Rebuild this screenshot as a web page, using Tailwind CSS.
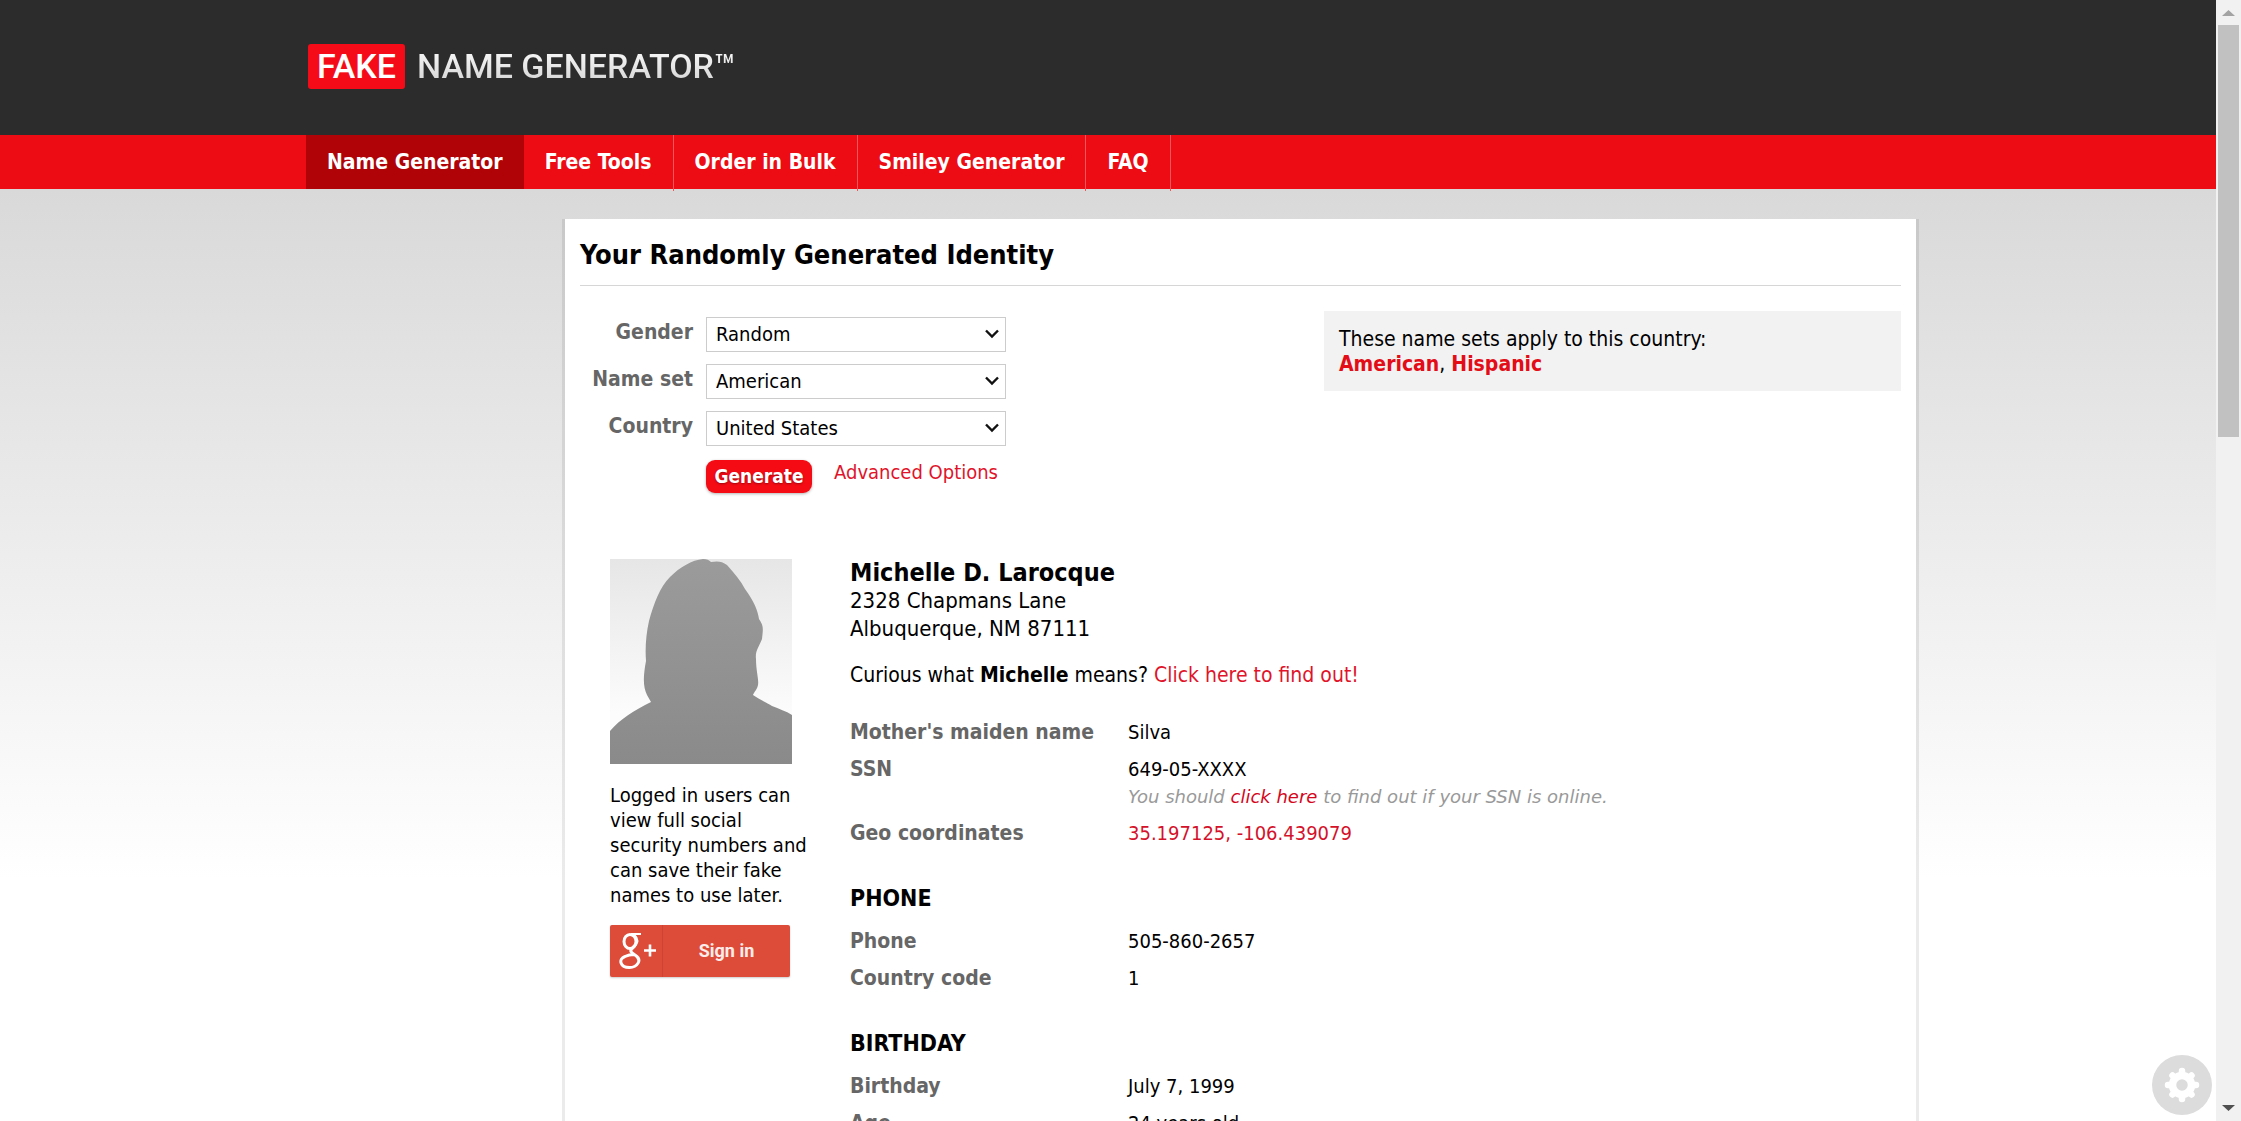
<!DOCTYPE html>
<html lang="en">
<head>
<meta charset="utf-8">
<title>Fake Name Generator</title>
<script src="https://cdn.jsdelivr.net/npm/@tailwindcss/browser@4"></script>
</head>
<body class="h-screen overflow-hidden bg-white font-['DejaVu_Sans_Condensed','DejaVu_Sans',sans-serif] text-[20px] leading-[25px] text-black">
<div class="flex h-full">
  <div class="h-full min-w-0 flex-1 overflow-hidden">
    <header class="h-[135px] bg-[#2c2c2c]">
      <div class="mx-auto max-w-[1616px] px-2 pt-11">
        <a href="#" class="flex w-fit items-center gap-3 font-['Roboto',sans-serif] text-[34px] font-medium leading-[45px]">
          <span class="rounded-[3px] bg-[#f50b17] px-[9px] text-white">FAKE</span>
          <span class="bg-linear-to-b from-white to-[#cfcfcf] bg-clip-text text-transparent">NAME GENERATOR™</span>
        </a>
      </div>
    </header>
    <nav class="h-[54px] bg-[#ed0c13]">
      <div class="mx-auto flex max-w-[1616px] pl-1.5 text-[21px] font-bold leading-[54px] text-white">
        <a href="#" class="h-[54px] bg-[#b00307] px-[21px]">Name Generator</a>
        <a href="#" class="h-14 border-r border-[#f2555a] px-[21px]">Free Tools</a>
        <a href="#" class="h-14 border-r border-[#f2555a] px-[21px]">Order in Bulk</a>
        <a href="#" class="h-14 border-r border-[#f2555a] px-[21px]">Smiley Generator</a>
        <a href="#" class="h-14 border-r border-[#f2555a] px-[21px]">FAQ</a>
      </div>
    </nav>
    <div class="h-full bg-linear-to-b from-[#d9d9d9] to-white to-[690px] pt-[30px]">
      <main class="mx-auto h-full max-w-[1616px] pl-[265px]">
        <div class="h-full bg-white px-[15px] pt-4 shadow-[0_3px_0_3px_rgba(0,0,0,0.08)]">
          <h1 class="border-b border-[#d6d6d6] pb-2.5 text-[27px] font-bold leading-10">Your Randomly Generated Identity</h1>
          <div class="flex items-start justify-between pt-[25px]">
            <form class="grid grid-cols-[113px_300px] gap-x-[13px] gap-y-3 pt-1.5">
              <label for="gender" class="pt-[3px] text-right text-[21px] font-bold text-[#666]">Gender</label>
              <div class="relative">
                <select id="gender" class="block h-[35px] w-full appearance-none border border-[#ccc] bg-white pl-[9px]"><option>Random</option></select>
                <svg class="pointer-events-none absolute right-[7px] top-3 h-[10px] w-[14px]" viewBox="0 0 14 10" fill="none" stroke="#111" stroke-width="2.4"><path d="M1 1.5 7 7.5 13 1.5"/></svg>
              </div>
              <label for="nameset" class="pt-[3px] text-right text-[21px] font-bold text-[#666]">Name set</label>
              <div class="relative">
                <select id="nameset" class="block h-[35px] w-full appearance-none border border-[#ccc] bg-white pl-[9px]"><option>American</option></select>
                <svg class="pointer-events-none absolute right-[7px] top-3 h-[10px] w-[14px]" viewBox="0 0 14 10" fill="none" stroke="#111" stroke-width="2.4"><path d="M1 1.5 7 7.5 13 1.5"/></svg>
              </div>
              <label for="country" class="pt-[3px] text-right text-[21px] font-bold text-[#666]">Country</label>
              <div class="relative">
                <select id="country" class="block h-[35px] w-full appearance-none border border-[#ccc] bg-white pl-[9px]"><option>United States</option></select>
                <svg class="pointer-events-none absolute right-[7px] top-3 h-[10px] w-[14px]" viewBox="0 0 14 10" fill="none" stroke="#111" stroke-width="2.4"><path d="M1 1.5 7 7.5 13 1.5"/></svg>
              </div>
              <div class="col-start-2 flex items-start gap-[22px] pt-0.5">
                <button type="button" class="h-[33px] w-[106px] rounded-[9px] bg-[#f40b14] text-[19px] font-bold text-white shadow-[0_1px_3px_rgba(0,0,0,0.3)] [text-shadow:0_1px_2px_rgba(0,0,0,0.35)]">Generate</button>
                <a href="#" class="whitespace-nowrap text-[#e0142a]">Advanced Options</a>
              </div>
            </form>
            <aside class="h-20 w-[577px] bg-[#f2f2f2] px-[15px] py-4">
              <p class="text-[21px]">These name sets apply to this country:</p>
              <p class="text-[21px]"><a href="#" class="font-bold text-[#e30d17]">American</a>, <a href="#" class="font-bold text-[#e30d17]">Hispanic</a></p>
            </aside>
          </div>
          <div class="flex gap-10 pl-[30px] pt-[66px]">
            <div class="w-[200px] shrink-0">
              <svg class="block h-[205px] w-[182px]" viewBox="0 0 182 205" role="img" aria-label="Silhouette of a woman">
                <defs>
                  <linearGradient id="bg" x1="0" y1="0" x2="0" y2="1"><stop offset="0" stop-color="#e6e6e6"/><stop offset=".75" stop-color="#fcfcfc"/></linearGradient>
                  <linearGradient id="fg" x1="0" y1="0" x2="0" y2="1"><stop offset="0" stop-color="#9b9b9b"/><stop offset="1" stop-color="#8a8a8a"/></linearGradient>
                </defs>
                <path fill="url(#bg)" d="M0 0h182v205H0z"/>
                <path fill="url(#fg)" d="M0 172C10 160 25 151 41 143L37 136C33 128 33 118 36 102C35 90 36 75 39 62C44 44 50 28 60 18C70 8 82 1 93 0C97 0 99 1 101 3C107 2 112 2 117 6C124 14 131 22 135 30C144 42 148 52 149 60C154 67 153 70 152 80C149 88 145 92 146 100C146 112 149 120 148 126C147 131 144 133 143 136C150 141 158 144 162 147C169 150 176 152 182 156V205H0Z"/>
              </svg>
              <p class="pt-[19px]">Logged in users can view full social security numbers and can save their fake names to use later.</p>
              <button type="button" class="mt-[17px] flex h-[52px] w-[180px] rounded-[2px] bg-[#dd4b39] font-['Roboto',sans-serif] text-[18px] font-bold leading-[52px] text-white/90 shadow-[0_1px_2px_rgba(0,0,0,0.2)]">
                <span class="flex h-full w-[53px] items-center border-r border-[#cf4332] pl-[9px]">
                  <svg class="h-[38px] w-[38px]" viewBox="0 0 38 38" fill="none" stroke="#fff"><g stroke-width="3"><ellipse cx="11" cy="9.500" rx="6" ry="7"/><path stroke-width="2" d="M12 2H22"/><path d="M15 3C20 8 18 12 14 15.500C10 19 12 20.500 16 23C24 28 18 35.500 10.500 35.500C1 35.500-1 27 6 24.500C9 23 12 22.500 15 22.500"/></g><path stroke-width="2.600" d="M25 18.500H37M31 12.500V24.500"/></svg>
                </span>
                <span class="flex-1">Sign in</span>
              </button>
            </div>
            <div class="min-w-0 flex-1">
              <h2 class="text-[25px] font-bold leading-7">Michelle D. Larocque</h2>
              <p class="text-[22px] leading-7">2328 Chapmans Lane<br>Albuquerque, NM 87111</p>
              <p class="pt-5 text-[21px]">Curious what <b>Michelle</b> means? <a href="#" class="text-[#e0142a]">Click here to find out!</a></p>
              <dl class="grid grid-cols-[278px_1fr] gap-y-3 pt-8">
                <dt class="text-[21px] font-bold text-[#666]">Mother's maiden name</dt><dd>Silva</dd>
                <dt class="text-[21px] font-bold text-[#666]">SSN</dt>
                <dd>649-05-XXXX<p class="pt-0.5 font-['DejaVu_Sans',sans-serif] text-[18px] italic text-[#999]">You should <a href="#" class="text-[#d4071c]">click here</a> to find out if your SSN is online.</p></dd>
                <dt class="text-[21px] font-bold text-[#666]">Geo coordinates</dt><dd><a href="#" class="text-[#d4122a]">35.197125, -106.439079</a></dd>
              </dl>
              <h3 class="pt-10 text-[23px] font-bold">PHONE</h3>
              <dl class="grid grid-cols-[278px_1fr] gap-y-3 pt-[18px]">
                <dt class="text-[21px] font-bold text-[#666]">Phone</dt><dd>505-860-2657</dd>
                <dt class="text-[21px] font-bold text-[#666]">Country code</dt><dd>1</dd>
              </dl>
              <h3 class="pt-10 text-[23px] font-bold">BIRTHDAY</h3>
              <dl class="grid grid-cols-[278px_1fr] gap-y-3 pt-[18px]">
                <dt class="text-[21px] font-bold text-[#666]">Birthday</dt><dd>July 7, 1999</dd>
                <dt class="text-[21px] font-bold text-[#666]">Age</dt><dd>24 years old</dd>
              </dl>
            </div>
          </div>
        </div>
      </main>
    </div>
  </div>
  <div class="flex w-[25px] shrink-0 flex-col items-center bg-[#f1f1f1]" aria-hidden="true">
    <svg class="h-[25px] w-[25px]" viewBox="0 0 25 25"><path fill="#a3a3a3" d="M6 16 12.500 10 19 16z"/></svg>
    <div class="h-[412px] w-[21px] bg-[#c1c1c1]"></div>
    <svg class="mt-auto h-[25px] w-[25px]" viewBox="0 0 25 25"><path fill="#505050" d="M6 9 12.500 15 19 9z"/></svg>
  </div>
</div>
<button type="button" aria-label="Settings" class="fixed bottom-[6px] right-[29px] size-[60px] rounded-full bg-[#dcdcdc]">
  <svg class="size-[60px]" viewBox="0 0 60 60"><circle cx="30" cy="30" r="9.500" fill="none" stroke="#fff" stroke-width="7.500"/><path stroke="#fff" stroke-width="6.500" stroke-linecap="round" d="M30 19V16M30 41V44M19 30H16M41 30H44M22 22 20.500 20.500M38 38 39.500 39.500M38 22 39.500 20.500M22 38 20.500 39.500"/></svg>
</button>
</body>
</html>
